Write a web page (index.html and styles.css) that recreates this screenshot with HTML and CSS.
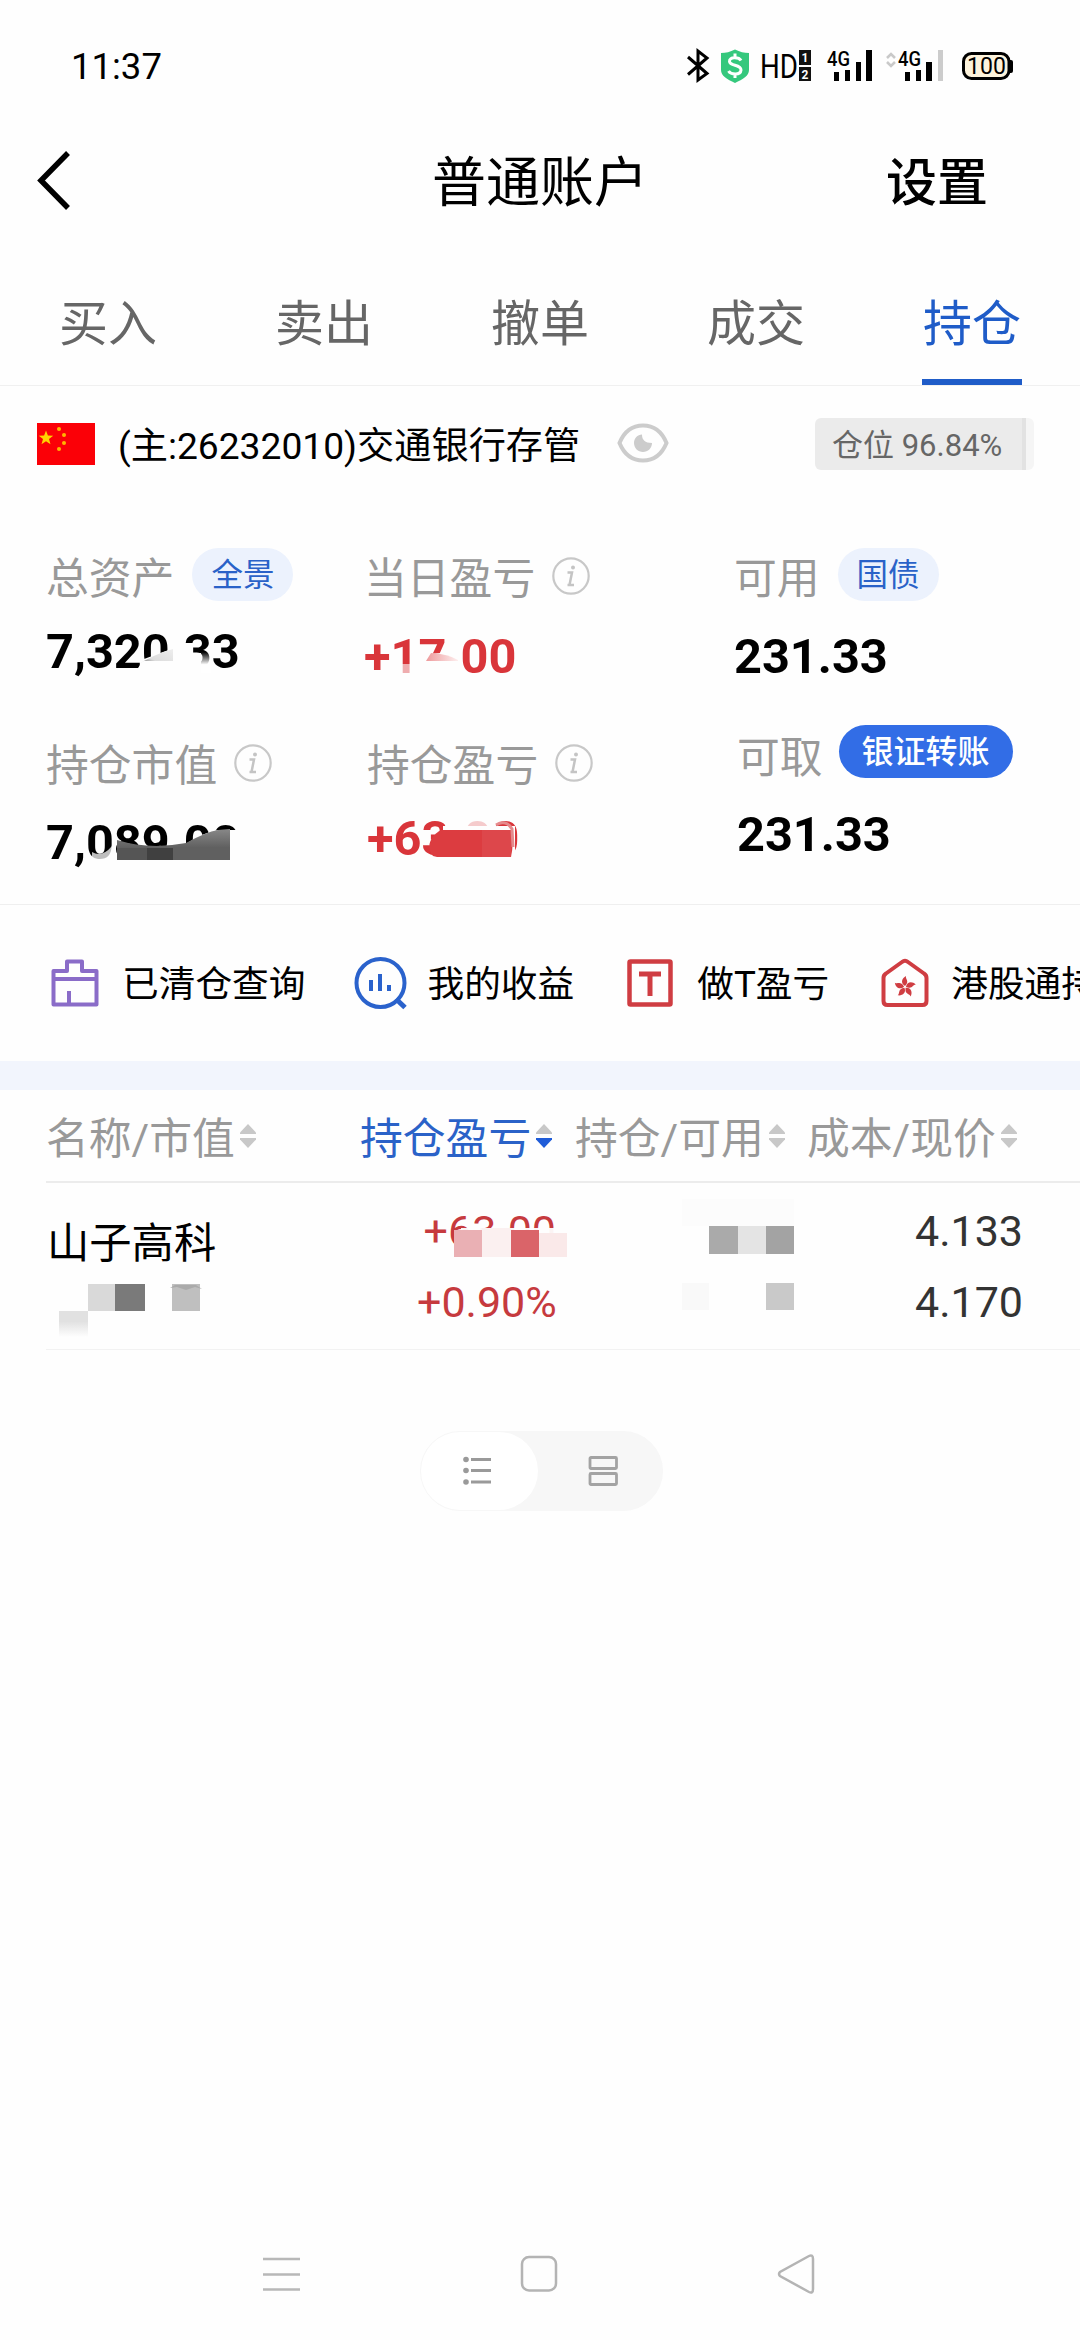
FILE: index.html
```html
<!DOCTYPE html>
<html lang="zh-CN">
<head>
<meta charset="utf-8">
<title>普通账户</title>
<link rel="stylesheet" href="styles.css">
</head>
<body>
<svg class="defs" width="0" height="0">
  <symbol id="info" viewBox="0 0 38 38">
    <circle cx="19" cy="19" r="17.700" fill="none" stroke="#c8c8c8" stroke-width="2.200"/>
    <path d="M15.500 15.500H20L17.500 28H22M15.500 28H18" fill="none" stroke="#c4c4c4" stroke-width="2.500"/>
    <circle cx="21" cy="10.500" r="2" fill="#c4c4c4"/>
  </symbol>
  <symbol id="sort" viewBox="0 0 16 24">
    <path d="M8 0 16 8.500V10H0V8.500z" class="sort-up"/>
    <path d="M0 14H16V15.500L8 24 0 15.500z" class="sort-down"/>
  </symbol>
</svg>

<div class="status">
  <span class="clock">11:37</span>
  <svg class="status-icons" width="330" height="40" viewBox="684 46 330 40">
    <path d="M687 57 706 73.500 697 80V51L706 58 687 74.500" fill="none" stroke="#000" stroke-width="3"/>
    <path d="M734 49.500C739 52 743 53 748 53V70C748 76 742 79 734 83 726 79 720 76 720 70V53C725 53 729 52 734 49.500z" fill="#35c87d"/>
    <path d="M740 60.500C738 57 728 56.500 728.500 61.500 729 66.500 740 64 740 70 739.500 75.500 730 75 727.500 71M734 53.500V57M734 74V78" fill="none" stroke="#fff" stroke-width="3"/>
    <text x="759" y="78" class="st-hd" textLength="38" lengthAdjust="spacingAndGlyphs">HD</text>
    <rect x="798" y="50" width="12" height="15" fill="#111"/><rect x="798" y="67" width="12" height="14" fill="#111"/>
    <text x="804" y="62" class="st-sim">1</text><text x="804" y="79" class="st-sim">2</text>
    <text x="826" y="66" class="st-net" textLength="23" lengthAdjust="spacingAndGlyphs">4G</text>
    <path d="M833 72h5v9h-5zM844 70h5v11h-5zM855 62h5v19h-5zM865 50h6v31h-6z"/>
    <path d="M886 58l4-4 4 4M886 62l4 4 4-4" fill="none" stroke="#c9c9c9" stroke-width="2.500"/>
    <text x="897" y="66" class="st-net" textLength="23" lengthAdjust="spacingAndGlyphs">4G</text>
    <path d="M904 72h5v9h-5zM915 70h5v11h-5zM925 62h6v19h-6z"/>
    <path d="M937 50h5v31h-5z" fill="#ccc"/>
    <rect x="1006" y="60" width="6" height="13" rx="2"/>
    <rect x="962.500" y="53.500" width="45.500" height="25" rx="8" fill="#fdf3dc" stroke="#000" stroke-width="3"/>
    <text x="985.500" y="74" class="st-bat">100</text>
  </svg>
</div>

<header class="topbar">
  <svg class="back" width="36" height="60" viewBox="0 0 36 60"><path d="M32 2 5 29.500 32 57" fill="none" stroke="#000" stroke-width="5.500"/></svg>
  <h1 class="title">普通账户</h1>
  <span class="settings">设置</span>
</header>

<nav class="tabs">
  <span class="tab">买入</span>
  <span class="tab">卖出</span>
  <span class="tab">撤单</span>
  <span class="tab">成交</span>
  <span class="tab active">持仓</span>
</nav>

<section class="account">
  <svg class="flag" width="58" height="42" viewBox="0 0 58 42">
    <rect width="58" height="42" fill="#fb0007"/>
    <path d="M9 7.500 10.900 12.600 16.200 12.800 12 16.100 13.500 21.300 9 18.300 4.500 21.300 6 16.100 1.800 12.800 7.100 12.600z" fill="#ffd200"/>
    <g fill="#ffb400"><circle cx="22" cy="6" r="2"/><circle cx="27" cy="12" r="2"/><circle cx="27" cy="20" r="2"/><circle cx="22" cy="26" r="2"/></g>
  </svg>
  <span class="account-name">(主:26232010)交通银行存管</span>
  <svg class="eye" width="52" height="40" viewBox="0 0 52 40">
    <path d="M2.500 20C7 9 15 2.500 26 2.500S45 9 49.500 20C45 31 37 37.500 26 37.500S7 31 2.500 20z" fill="none" stroke="#ccc" stroke-width="4"/>
    <path d="M25 11.500C25 17 28 20 35 20 35 25 31 29 26 29S17 25 17 20 20.500 12 25 11.500z" fill="#ccc"/>
  </svg>
  <span class="position-badge">仓位 96.84%</span>
</section>

<section class="assets">
  <div class="col col-a">
    <div class="label">总资产<span class="pill">全景</span></div>
    <div class="value">7,320.33
      <svg class="smudge" width="200" height="60" viewBox="0 0 200 60">
        <defs>
          <linearGradient id="g1" x1="0" y1="1" x2="1" y2="0"><stop offset="0" stop-color="#111"/><stop offset=".45" stop-color="#ddd"/><stop offset="1" stop-color="#eee"/></linearGradient>
          <linearGradient id="g2" x1="0" y1="0" x2="0" y2="1"><stop offset="0" stop-color="#fff" stop-opacity="0"/><stop offset=".6" stop-color="#fff"/></linearGradient>
        </defs>
        <path d="M90 50 98 38 128 27V50z" fill="#fefefe"/>
        <path d="M88 46Q108 33 127 28V40H98z" fill="url(#g1)"/>
        <path d="M127 24H142V52H127z" fill="#fefefe"/>
        <path d="M140 32H155V52H140z" fill="#fefefe"/>
        <path d="M155 31H165V52H155z" fill="url(#g2)"/>
      </svg>
    </div>
    <div class="label second">持仓市值<svg class="info" width="38" height="38"><use href="#info"/></svg></div>
    <div class="value v2">7,089.00
      <svg class="smudge" width="220" height="60" viewBox="0 0 220 60">
        <defs><linearGradient id="g3" x1="0" y1="0" x2="0" y2="1"><stop offset="0" stop-color="#888"/><stop offset=".6" stop-color="#606060"/></linearGradient></defs>
        <path d="M46 40Q56 46 66 34V51H46z" fill="#fefefe" opacity=".75"/>
        <path d="M71 30Q105 40 138 33 158 20 172 18H200V52H71z" fill="#fefefe"/>
        <path d="M71 28Q103 38 140 31 160 20 172 18L184 17V48H71z" fill="url(#g3)"/>
        <path d="M71 36H101V48H71z" fill="#555"/>
        <path d="M101 36H127V48H101z" fill="#404040"/>
      </svg>
    </div>
  </div>
  <div class="col col-b">
    <div class="label">当日盈亏<svg class="info" width="38" height="38"><use href="#info"/></svg></div>
    <div class="value up">+17.00
      <svg class="smudge" width="180" height="60" viewBox="0 0 180 60">
        <defs><linearGradient id="g4" x1="0" y1="0" x2="1" y2="0"><stop offset="0" stop-color="#ee9a9c"/><stop offset="1" stop-color="#fdeeee"/></linearGradient></defs>
        <path d="M34 38H47V52H34z" fill="#fefefe" opacity=".6"/>
        <path d="M58 30Q80 24 94 30V52H48V38z" fill="#fefefe"/>
        <path d="M62 35 67 27Q84 28 94 34V35z" fill="url(#g4)"/>
      </svg>
    </div>
    <div class="label second shift">持仓盈亏<svg class="info" width="38" height="38"><use href="#info"/></svg></div>
    <div class="value v2 up shift">+63.00
      <svg class="smudge" width="180" height="60" viewBox="0 0 180 60">
        <path d="M76 18H148V50H76z" fill="#fefefe"/>
        <rect x="78" y="10" width="48" height="12" fill="#fefefe" opacity=".75"/>
        <path d="M66 48C58 38 64 28 74 22H142Q148 30 144 49H70z" fill="#dc3c40"/>
        <path d="M115 22H144V49H115z" fill="#dd474b"/>
        <path d="M129 17Q139 11 145 21L146 39" fill="none" stroke="#e58a8c" stroke-width="3"/>
      </svg>
    </div>
  </div>
  <div class="col col-c">
    <div class="label">可用<span class="pill">国债</span></div>
    <div class="value">231.33</div>
    <div class="label second shift">可取<span class="pill solid">银证转账</span></div>
    <div class="value v2 shift">231.33</div>
  </div>
</section>

<section class="shortcuts">
  <div class="shortcut s1">
    <svg width="48" height="48" viewBox="0 0 48 48" fill="none" stroke="#8a6cc8" stroke-width="4"><path d="M2.500 12H16V2.500H31V12H45.500V45.500H2.500zM2.500 20H45.500M18 45V32" stroke-linejoin="round"/></svg>
    <span>已清仓查询</span>
  </div>
  <div class="shortcut s2">
    <svg width="54" height="54" viewBox="0 0 54 54" fill="none" stroke="#2a62cc" stroke-width="4"><circle cx="26.500" cy="27" r="24"/><path d="M42 43 51 51.500" stroke-width="5"/><path d="M17 24V35M26 18V35M35 29V35"/></svg>
    <span>我的收益</span>
  </div>
  <div class="shortcut s3">
    <svg width="46" height="48" viewBox="0 0 46 48" fill="none" stroke="#cf3d42" stroke-width="4.500"><rect x="2.500" y="2.500" width="41" height="43" rx="1"/><path d="M12 15H34M23 15V37" stroke-width="5"/></svg>
    <span>做T盈亏</span>
  </div>
  <div class="shortcut s4">
    <svg width="48" height="50" viewBox="0 0 48 50" fill="none" stroke="#cf3d42" stroke-width="4"><path d="M21 4Q24 1.500 27 4L43 15.500Q45.500 17 45.500 20V43Q45.500 47 41.500 47H6.500Q2.500 47 2.500 43V20Q2.500 17 5 15.500z" stroke-linejoin="round"/>
      <g fill="#cf3d42" stroke="none" transform="translate(24 29)"><path id="petal" d="M0-1C-5-4-3-9 1-11 0-8 5-6 0-1z"/><use href="#petal" transform="rotate(72)"/><use href="#petal" transform="rotate(144)"/><use href="#petal" transform="rotate(216)"/><use href="#petal" transform="rotate(288)"/></g></svg>
    <span>港股通持</span>
  </div>
</section>

<div class="band"></div>

<div class="thead">
  <span class="th">名称/市值<svg width="16" height="24"><use href="#sort"/></svg></span>
  <span class="th sorted">持仓盈亏<svg width="16" height="24"><use href="#sort"/></svg></span>
  <span class="th">持仓/可用<svg width="16" height="24"><use href="#sort"/></svg></span>
  <span class="th">成本/现价<svg width="16" height="24"><use href="#sort"/></svg></span>
</div>

<div class="holding">
  <div class="h-name">
    <span class="stock">山子高科</span>
    <svg class="mosaic" width="145" height="54" viewBox="0 0 145 54">
      <defs><linearGradient id="fade" x1="0" y1="0" x2="0" y2="1"><stop offset=".4" stop-color="#e1e1e1"/><stop offset="1" stop-color="#fefefe"/></linearGradient></defs>
      <rect x="29" width="27" height="27" fill="#d9d9d9"/><rect x="56" width="30" height="27" fill="#7a7a7a"/>
      <rect x="113" width="28" height="27" fill="#bfbfbf"/><path d="M111 4 116 1H137L143 5 136 3 127 6 118 3z" fill="#aaa"/>
      <rect y="27" width="29" height="26" fill="url(#fade)"/>
    </svg>
  </div>
  <div class="h-profit">
    <span class="num">+63.00
      <svg class="smudge" width="150" height="60" viewBox="0 0 150 60">
        <rect x="42" y="27" width="106" height="28" fill="#fefefe" opacity=".95"/>
        <rect x="35" y="29" width="28" height="27" fill="#eab0b4"/><rect x="63" y="27" width="29" height="29" fill="#fbf0f0"/>
        <rect x="92" y="29" width="28" height="27" fill="#da6469"/><rect x="120" y="32" width="28" height="24" fill="#fae9e9"/>
      </svg>
    </span>
    <span class="num">+0.90%</span>
  </div>
  <svg class="mosaic-qty" width="112" height="117" viewBox="682 1195 112 117">
    <rect x="682" y="1200" width="112" height="27" fill="#fcfcfc"/>
    <rect x="709" y="1227" width="29" height="28" fill="#aaa"/><rect x="738" y="1227" width="28" height="28" fill="#e4e4e4"/><rect x="766" y="1227" width="28" height="28" fill="#a3a3a3"/>
    <rect x="682" y="1284" width="27" height="27" fill="#f9f9f9"/><rect x="766" y="1284" width="28" height="27" fill="#c9c9c9"/>
  </svg>
  <div class="h-price">
    <span class="num">4.133</span>
    <span class="num">4.170</span>
  </div>
</div>

<div class="view-toggle">
  <span class="option chosen"><svg width="28" height="30" viewBox="0 0 28 30" fill="#9a9a9a"><circle cx="3" cy="3.500" r="2.800"/><circle cx="3" cy="14.500" r="2.800"/><circle cx="3" cy="26" r="2.800"/><path d="M8 2h20v3H8zM8 13h20v3H8zM8 24.500h20v3H8z"/></svg></span>
  <span class="option"><svg width="30" height="30" viewBox="0 0 30 30" fill="none" stroke="#a3a3a3" stroke-width="2.800"><rect x="2" y="1.500" width="26.500" height="11" rx="1"/><rect x="2" y="17.500" width="26.500" height="11" rx="1"/></svg></span>
</div>

<nav class="sysnav">
  <svg width="38" height="42" viewBox="0 0 38 42"><path d="M0 6H37M0 21.500H37M0 36.500H37" stroke="#b8b8b8" stroke-width="2.500"/></svg>
  <svg width="38" height="42" viewBox="0 0 38 42"><rect x="2" y="4" width="34" height="33.500" rx="7" fill="none" stroke="#b4b4b4" stroke-width="2.500"/></svg>
  <svg width="38" height="42" viewBox="0 0 38 42"><path d="M32 3Q36 1 36 6V36Q36 41 32 39L3 23Q1 21 3 19z" fill="none" stroke="#b4b4b4" stroke-width="2.500"/></svg>
</nav>
</body>
</html>
```
FILE: styles.css
```css
* { box-sizing: border-box; margin: 0; padding: 0; }
body {
  width: 1080px; height: 2340px; overflow: hidden;
  display: flex; flex-direction: column;
  background: #fefefe; color: #000;
  font-family: Roboto, "Noto Sans CJK SC", sans-serif;
  white-space: nowrap;
}
svg { display: block; flex: none; }
.defs { position: absolute; }

.status { height: 100px; padding: 32px 65px 0 71px; display: flex; justify-content: space-between; align-items: center; flex: none; }
.clock { font-size: 36.5px; }
.st-hd { font-size: 33px; }
.st-sim { font-size: 12px; font-weight: 700; fill: #fff; text-anchor: middle; }
.st-net { font-size: 20px; font-weight: 500; }
.st-bat { font-size: 23px; text-anchor: middle; }

.topbar { height: 164px; display: grid; grid-template-columns: 1fr auto 1fr; align-items: center; flex: none; }
.back { margin-left: 36px; margin-top: -2px; }
.title { font-size: 54px; line-height: 80px; font-weight: 400; padding-top: 4px; }
.settings { justify-self: end; padding: 4px 92px 0 0; font-size: 51px; line-height: 80px; font-weight: 500; }

.tabs { height: 122px; display: flex; border-bottom: 1px solid #f0f0f0; flex: none; }
.tab { flex: 1; display: flex; flex-direction: column; align-items: center; padding-top: 26px; font-size: 49px; line-height: 70px; color: #666; }
.tab.active { color: #1f5cc8; }
.tab.active::after { content: ""; width: 100px; height: 6px; margin-top: auto; background: #1f5cc8; }

.account { height: 117px; padding: 0 46px 0 37px; display: flex; align-items: center; flex: none; }
.flag { margin-top: -2px; }
.account-name { margin-left: 23px; font-size: 37.2px; line-height: 60px; padding-top: 3px; }
.eye { margin-left: 37px; margin-top: -3px; }
.position-badge { margin-left: auto; margin-top: -1px; width: 219px; height: 52px; padding: 2px 0 0 17px; border-radius: 6px; font-size: 31px; line-height: 52px; color: #666; background: linear-gradient(90deg, #ebebeb 207px, #e2e2e2 207px 211px, #f5f5f5 211px); }

.assets { height: 402px; padding: 45px 0 0 46px; display: grid; grid-template-columns: 318px 370px 1fr; border-bottom: 1px solid #efefef; flex: none; }
.col { display: flex; flex-direction: column; }
.label { height: 62px; display: flex; align-items: flex-start; font-size: 42.8px; line-height: 62px; color: #999; }
.value { position: relative; font-size: 48.7px; line-height: 62px; height: 60px; font-weight: 700; }
.smudge { position: absolute; left: 0; top: 0; }
.up { color: #d9353a; }
.shift { margin-left: 3px; }
.info { margin: 9px 0 0 17px; }
.pill { height: 53px; margin-left: 18px; padding: 1px 19px 0; border-radius: 27px; background: #ecf2fd; color: #2a62c8; font-size: 31.5px; line-height: 53px; }
.pill.solid { margin-top: -2px; margin-left: 16px; padding: 1px 23px 0; background: #326de6; color: #fff; font-size: 32px; font-weight: 500; }
.col-a .value { margin-top: 11px; }
.col-a .second { margin-top: 54px; }
.col-a .v2 { margin-top: 15px; }
.col-b .value { margin-top: 16px; }
.col-b .second { margin-top: 49px; }
.col-b .v2 { margin-top: 11px; }
.col-c .value { margin-top: 16px; }
.col-c .second { margin-top: 41px; }
.col-c .v2 { margin-top: 15px; }

.shortcuts { height: 156px; padding: 0 0 0 51px; display: flex; align-items: center; overflow: hidden; flex: none; }
.shortcut { display: flex; align-items: center; flex: none; font-size: 36.7px; line-height: 60px; }
.shortcut span { margin-top: 4px; }
.s1 span { margin-left: 23px; }
.s2 { margin-left: 49px; }
.s2 span { margin-left: 19px; }
.s3 { margin-left: 53px; }
.s3 span { margin-left: 24px; }
.s4 { margin-left: 52px; }
.s4 span { margin-left: 22px; }

.band { height: 29px; background: #f2f5fd; flex: none; }

.thead { height: 91px; padding-left: 46px; display: grid; grid-template-columns: 314px 215px 232px 1fr; align-items: center; flex: none; font-size: 42.8px; line-height: 60px; color: #999; }
.th { display: flex; align-items: center; padding-top: 7px; }
.th svg { margin: -7px 0 0 5px; }
.sort-up, .sort-down { fill: #c8c8c8; }
.sort-down { fill: var(--down, #c8c8c8); }
.sorted { color: #2a62c8; --down: #1f5cd8; }

.holding { height: 169px; margin-left: 46px; border-top: 2px solid #ececec; border-bottom: 1px solid #f2f2f2; display: grid; grid-template-columns: 371px 265px 233px 1fr; flex: none; }
.h-name { padding-top: 31px; display: flex; flex-direction: column; }
.stock { font-size: 42.3px; line-height: 60px; padding-left: 1px; }
.mosaic { margin: 10px 0 0 13px; }
.h-profit, .h-price { padding-top: 18px; display: flex; flex-direction: column; gap: 11px; font-size: 43px; line-height: 60px; }
.num { position: relative; height: 60px; }
.h-profit { width: 137px; text-align: right; color: #c63a3e; }
.h-profit .num:first-child { left: 2px; }
.mosaic-qty { margin-top: 11px; }
.h-price { color: #333; }

.view-toggle { width: 243px; height: 80px; margin: 81px 0 0 420px; display: flex; background: #f7f7f7; border-radius: 40px; border: 1px solid #f7f7f7; flex: none; }
.option { flex: 1; display: flex; align-items: center; justify-content: center; padding-left: 5px; }
.chosen { flex: 0 0 117px; padding: 0 6px 0 0; background: #fff; border-radius: 40px; }
.sysnav { margin-top: auto; height: 87px; padding: 0 265px 0 263px; display: flex; justify-content: space-between; flex: none; }
```
